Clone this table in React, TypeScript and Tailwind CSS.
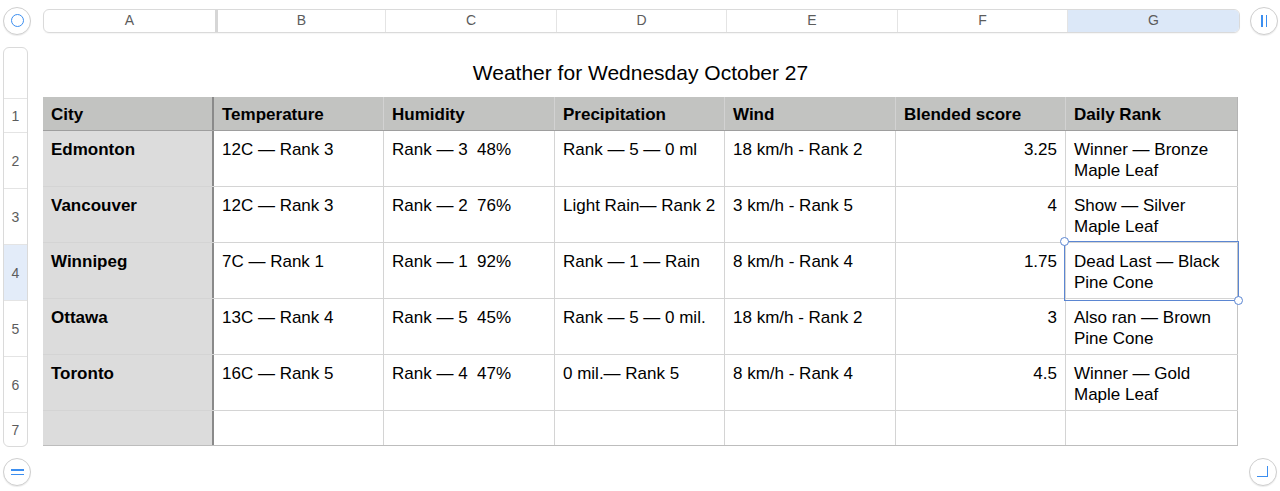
import React from "react";

const font = { fontFamily: '"Liberation Sans", Arial, Helvetica, sans-serif' };

const headers = ["City", "Temperature", "Humidity", "Precipitation", "Wind", "Blended score", "Daily Rank"];
const rows: string[][] = [
  ["Edmonton", "12C — Rank 3", "Rank — 3  48%", "Rank — 5 — 0 ml", "18 km/h - Rank 2", "3.25", "Winner — Bronze Maple Leaf"],
  ["Vancouver", "12C — Rank 3", "Rank — 2  76%", "Light Rain— Rank 2", "3 km/h - Rank 5", "4", "Show — Silver Maple Leaf"],
  ["Winnipeg", "7C — Rank 1", "Rank — 1  92%", "Rank — 1 — Rain", "8 km/h - Rank 4", "1.75", "Dead Last — Black Pine Cone"],
  ["Ottawa", "13C — Rank 4", "Rank — 5  45%", "Rank — 5 — 0 mil.", "18 km/h - Rank 2", "3", "Also ran — Brown Pine Cone"],
  ["Toronto", "16C — Rank 5", "Rank — 4  47%", "0 mil.— Rank 5", "8 km/h - Rank 4", "4.5", "Winner — Gold Maple Leaf"],
];

const letters = ["A", "B", "C", "D", "E", "F", "G"];
const widths = ["w-[171px]", "w-[170px]", "w-[171px]", "w-[170px]", "w-[171px]", "w-[170px]", "w-[172px]"];

function Circle({ children }: { children: React.ReactNode }) {
  return (
    <div className="w-[28px] h-[28px] rounded-full border border-[#cfcfcf] bg-white flex items-center justify-center shadow-[0_1px_1px_rgba(0,0,0,0.08)]">
      {children}
    </div>
  );
}

export default function App() {
  return (
    <div className="w-[1280px] h-[491px] bg-white overflow-hidden text-black flex flex-col" style={font}>
      {/* top bar */}
      <div className="flex items-center h-[40px] pt-[1px]">
        <div className="ml-[3px]">
          <Circle>
            <div className="w-[13px] h-[13px] rounded-full border-[1.5px] border-[#3b8ef0]" />
          </Circle>
        </div>
        <div className="ml-[12px] flex h-[24px] rounded-[6px] border border-[#dadada] text-[14px] text-[#5c5c5c] shadow-[0_1px_1px_rgba(0,0,0,0.04)]">
          {letters.map((l, i) => (
            <div
              key={l}
              className={`${widths[i]} h-full flex items-center justify-center ${
                i === 0 ? "" : i === 1 ? "border-l-[3px] border-[#d6d6d6]" : "border-l border-[#e4e4e4]"
              } ${i === 6 ? "bg-[#dce8f8] rounded-r-[5px] border-[#c8d6ea]" : ""}`}
            >
              {l}
            </div>
          ))}
        </div>
        <div className="ml-[10px]">
          <Circle>
            <div className="flex gap-[3px]">
              <div className="w-[1.5px] h-[12px] bg-[#3b8ef0]" />
              <div className="w-[1.5px] h-[12px] bg-[#3b8ef0]" />
            </div>
          </Circle>
        </div>
      </div>

      {/* body */}
      <div className="flex mt-[7px]">
        {/* row header */}
        <div className="ml-[3px] w-[25px] rounded-[6px] border border-[#dadada] flex flex-col text-[14px] text-[#5c5c5c] overflow-hidden">
          <div className="h-[50px]" />
          <div className="h-[34px] border-t border-[#e4e4e4] flex items-center justify-center pt-[1px]">1</div>
          {[2, 3, 4, 5, 6].map((n) => (
            <div
              key={n}
              className={`h-[56px] border-t border-[#e4e4e4] flex items-center justify-center pt-[1px] ${n === 4 ? "bg-[#e3ecf9] border-[#ccd8ea]" : ""}`}
            >
              {n}
            </div>
          ))}
          <div className="h-[34px] border-t border-[#e4e4e4] flex items-center justify-center pt-[1px]">7</div>
        </div>

        {/* main */}
        <div className="ml-[15px] flex flex-col">
          <div className="h-[50px] flex items-center justify-center text-[21px] pt-[2px]">Weather for Wednesday October 27</div>
          <div className="relative border-b border-[#bdbdbd]">
            {/* header row */}
            <div className="flex h-[34px] bg-[#c2c3c1] border-b border-[#9e9e9e] text-[17px] font-bold">
              {headers.map((h, i) => (
                <div
                  key={h}
                  className={`${widths[i]} h-full flex items-center px-[8px] pt-[2px] ${
                    i === 0 ? "border-r-[2px] border-[#8a8a8a]" : i === 6 ? "border-r border-[#b4b4b4]" : "border-r border-[#d2d2d2]"
                  }`}
                >
                  {h}
                </div>
              ))}
            </div>
            {rows.map((r, ri) => (
              <div key={ri} className="flex h-[56px] border-b border-[#d4d4d4] text-[17px] leading-[21px]">
                {r.map((c, ci) => (
                  <div
                    key={ci}
                    className={`${widths[ci]} h-full px-[8px] pt-[8px] whitespace-pre-wrap ${
                      ci === 0
                        ? "bg-[#dcdcdc] font-bold border-r-[2px] border-[#8a8a8a]"
                        : ci === 6
                        ? "border-r border-[#c4c4c4]"
                        : "border-r border-[#d4d4d4]"
                    } ${ci === 5 ? "text-right" : ""}`}
                  >
                    {c}
                  </div>
                ))}
              </div>
            ))}
            <div className="flex h-[34px]">
              {widths.map((w, ci) => (
                <div
                  key={ci}
                  className={`${w} h-full ${
                    ci === 0 ? "bg-[#dcdcdc] border-r-[2px] border-[#8a8a8a]" : ci === 6 ? "border-r border-[#c4c4c4]" : "border-r border-[#d4d4d4]"
                  }`}
                />
              ))}
            </div>
            {/* selection overlay */}
            <div className="absolute left-[1021px] top-[144px] w-[175px] h-[60px] border border-[#5b86d2] pointer-events-none">
              <div className="absolute -left-[5px] -top-[5px] w-[9px] h-[9px] rounded-full bg-white border border-[#5b86d2]" />
              <div className="absolute -right-[5px] -bottom-[5px] w-[9px] h-[9px] rounded-full bg-white border border-[#5b86d2]" />
            </div>
          </div>
        </div>
      </div>

      {/* bottom */}
      <div className="flex items-center justify-between mt-[11px] px-[3px]">
        <Circle>
          <div className="flex flex-col gap-[3px]">
            <div className="w-[13px] h-[1.5px] bg-[#3b8ef0]" />
            <div className="w-[13px] h-[1.5px] bg-[#3b8ef0]" />
          </div>
        </Circle>
        <Circle>
          <div className="w-[11px] h-[11px] border-r-[1.5px] border-b-[1.5px] border-[#3b8ef0] ml-[-1px] mt-[-1px]" />
        </Circle>
      </div>
    </div>
  );
}
